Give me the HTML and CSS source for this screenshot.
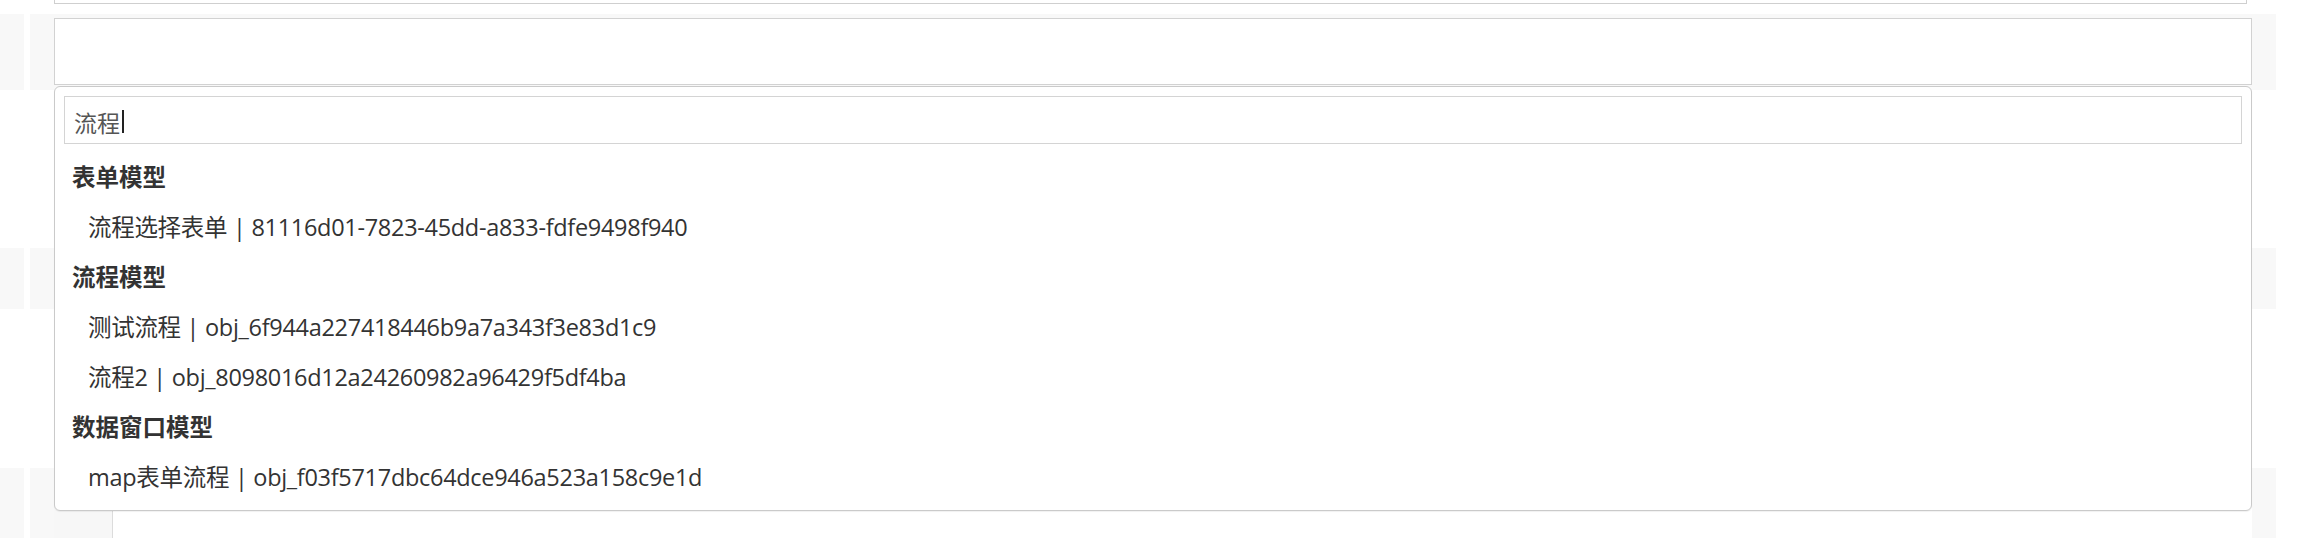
FILE: index.html
```html
<!DOCTYPE html>
<html lang="zh-CN">
<head>
<meta charset="utf-8">
<title>流程</title>
<link rel="stylesheet" href="styles.css">
</head>
<body>
<div class="page">
  <div class="row row-prev">
    <div class="cell-a"></div>
    <div class="cell-b"><div class="prev-box"></div></div>
  </div>
  <div class="row row1 shade">
    <div class="cell-a"></div>
    <div class="cell-b"><div class="select-box"></div></div>
  </div>
  <div class="row row2">
    <div class="cell-a"></div>
    <div class="cell-b"></div>
  </div>
  <div class="row row3 shade">
    <div class="cell-a"></div>
    <div class="cell-b"></div>
  </div>
  <div class="row row4">
    <div class="cell-a"></div>
    <div class="cell-b"></div>
  </div>
  <div class="row row5 shade">
    <div class="cell-a"></div>
    <div class="cell-b">
      <div class="editor"><div class="gutter"></div><div class="code"></div></div>
    </div>
  </div>

  <div class="dropdown">
    <div class="search"><span class="search-text">流程</span><span class="caret"></span></div>
    <ul class="results">
      <li class="group">
        <div class="group-label">表单模型</div>
        <ul class="options">
          <li class="option">流程选择表单 | 81116d01-7823-45dd-a833-fdfe9498f940</li>
        </ul>
      </li>
      <li class="group">
        <div class="group-label">流程模型</div>
        <ul class="options">
          <li class="option">测试流程 | obj_6f944a227418446b9a7a343f3e83d1c9</li>
          <li class="option">流程2 | obj_8098016d12a24260982a96429f5df4ba</li>
        </ul>
      </li>
      <li class="group">
        <div class="group-label">数据窗口模型</div>
        <ul class="options">
          <li class="option">map表单流程 | obj_f03f5717dbc64dce946a523a158c9e1d</li>
        </ul>
      </li>
    </ul>
  </div>
</div>
</body>
</html>
```

FILE: styles.css
```css
* { box-sizing: border-box; }
html, body { margin: 0; padding: 0; background: #fff; }
body {
  font-family: "Open Sans", "Noto Sans CJK SC", sans-serif;
  color: #333;
  width: 2298px;
  height: 538px;
  overflow: hidden;
}
.page { position: relative; }
.row {
  display: grid;
  grid-template-columns: 24px 2246px;
  column-gap: 6px;
}
.cell-b { padding: 0 24px; }
.shade .cell-a, .shade .cell-b { background: #f8f8f8; }

.row-prev { height: 14px; }
.prev-box {
  width: 2193px;
  height: 4px;
  border: 1px solid #cfcfcf;
  border-top: none;
}

.row1 { height: 76px; }
.row1 .cell-b { padding-top: 4px; }
.select-box {
  height: 67px;
  background: #fff;
  border: 1px solid #d2d2d2;
}
.row2 { height: 158px; }
.row3 { height: 61px; }
.row4 { height: 159px; }
.row5 { height: 80px; }

.editor { display: flex; height: 100%; }
.gutter { width: 59px; background: #f7f7f7; border-right: 1px solid #dcdcdc; }
.code { flex: 1; background: #fff; }

.dropdown {
  position: absolute;
  top: 86px;
  left: 54px;
  width: 2198px;
  height: 425px;
  background: #fff;
  border: 1px solid #cacaca;
  border-radius: 6px;
  padding: 9px;
  box-shadow: 0 1px 1px rgba(0, 0, 0, 0.06);
  z-index: 10;
}
.search {
  height: 48px;
  border: 1px solid #d4d4d4;
  padding: 3px 0 0 9px;
  display: flex;
  align-items: center;
  font-size: 23px;
  color: #555;
}
.caret {
  display: inline-block;
  width: 1.5px;
  height: 23px;
  margin-left: 2px;
  background: #222;
}
.results, .options { list-style: none; margin: 0; padding: 0; }
.results { margin-top: 8px; }
.group-label, .option {
  height: 50px;
  line-height: 50px;
  font-size: 23.5px;
  white-space: nowrap;
}
.group-label { font-weight: 700; padding-left: 8px; }
.option { padding-left: 24px; letter-spacing: -0.3px; }
```
